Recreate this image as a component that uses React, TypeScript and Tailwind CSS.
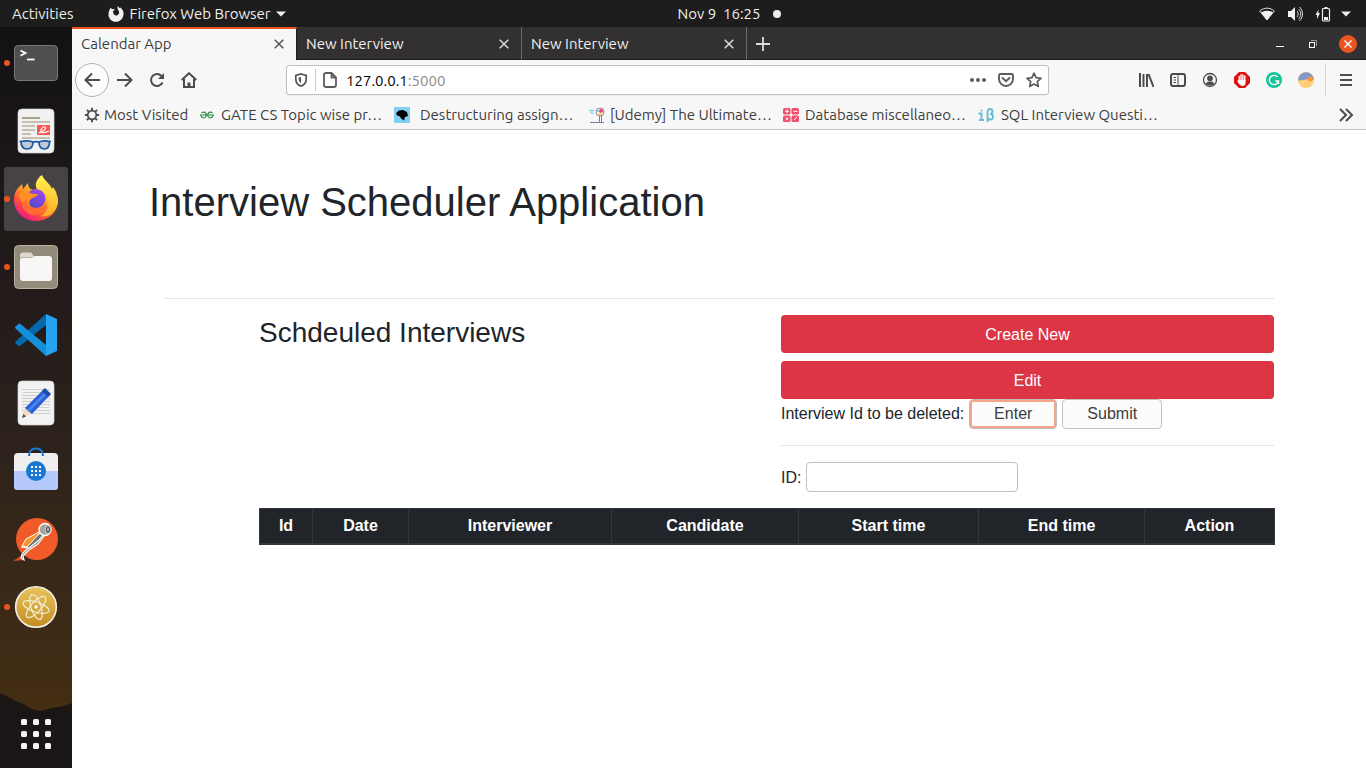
import type { ReactNode } from "react";

function DockItem({ label, running, active, children }: { label: string; running?: boolean; active?: boolean; children: ReactNode }) {
  return (
    <button
      type="button"
      aria-label={label}
      className={`relative flex h-16 w-16 shrink-0 items-center justify-center rounded-[3px] ${active ? "bg-[#474344]" : ""}`}
    >
      {running && <span className="absolute left-0 top-[29px] h-1.5 w-1.5 rounded-full bg-[#e95420]" />}
      <svg width="48" height="48" viewBox="0 0 48 48" aria-hidden="true">
        {children}
      </svg>
    </button>
  );
}

function TerminalIcon() {
  return (
    <g>
      <rect x="2.5" y="6.5" width="43" height="35" rx="3.5" fill="#4f4f4f" stroke="#777" />
      <path d="M8.5 11.5l5 2.6-5 2.6" fill="none" stroke="#fff" strokeWidth="1.8" />
      <path d="M15 20.5h7.5" stroke="#fff" strokeWidth="1.8" />
    </g>
  );
}

function DocViewerIcon() {
  return (
    <g>
      <rect x="6" y="2" width="36" height="44" rx="4" fill="#f1f1f1" stroke="#d5d5d5" strokeWidth=".7" />
      <path d="M10 11h18" stroke="#aaa28d" strokeWidth="2" />
      <path d="M10 15h28M10 19h13M10 23h13M10 27h9M10 31h28" stroke="#c4c0b2" strokeWidth="2" />
      <rect x="25" y="18" width="13" height="10" fill="#f4584f" />
      <path d="M26.500 26c5-1 8.500-5 6.500-6s-5.500 3-3.500 5 5 0 7.500-1" fill="none" stroke="#fff" strokeWidth="1.1" />
      <path d="M9 34.500c3-1 9-1 12 .5 0 5-2 7-6 7s-6-3-6-7.500zM27 35c3-1.500 8-1.500 10.500-.5 0 5-2 7.500-5 7.500s-5.500-2-5.500-7z" fill="#abb8c8" fillOpacity=".7" stroke="#1b5aa4" strokeWidth="1.700" />
      <path d="M21 35.500c2-1.200 4-1.200 6 0M9 34.500H7.500M37.500 34.500H39" fill="none" stroke="#1b5aa4" strokeWidth="1.700" />
    </g>
  );
}

function FirefoxIcon() {
  return (
    <g>
      <defs>
        <linearGradient id="fxBody" x1=".85" y1=".1" x2=".2" y2=".95">
          <stop offset="0" stopColor="#fff23f" />
          <stop offset=".35" stopColor="#ffa829" />
          <stop offset=".65" stopColor="#ff5b34" />
          <stop offset="1" stopColor="#ee108c" />
        </linearGradient>
        <linearGradient id="fxGlobe" x1=".8" y1="0" x2=".2" y2="1">
          <stop offset="0" stopColor="#a848e8" />
          <stop offset="1" stopColor="#4b48cc" />
        </linearGradient>
        <linearGradient id="fxTail" x1="0" y1="0" x2="0" y2="1">
          <stop offset="0" stopColor="#fff44f" />
          <stop offset="1" stopColor="#ffab26" />
        </linearGradient>
      </defs>
      <path d="M6 13l4-4 1 5 5-6c0 4 2 6 5 7l13-4c8 4 12 9 12 15 0 11-10 20-22 20S2 37 2 25c0-5 1-9 4-12z" fill="url(#fxBody)" />
      <path d="M30 0c2 5 7 8 9 12 1 2 1 2 2 0 5 6 7 17 1 24-4 5-9 6-13 5 6-4 9-10 7-16-2-6-7-7-11-11-3-4 0-11 5-14z" fill="url(#fxTail)" />
      <circle cx="24" cy="23.500" r="9.500" fill="url(#fxGlobe)" />
      <path d="M7 19c4-3 8-3 11-1 3 1 5 1 8 1-1 3-4 3-7 5-3 3-2 7 2 10-9-1-13-8-14-15z" fill="#ff8f22" />
      <path d="M15 24c-1 6 3 10 9 10 5 0 8-2 10-6 1 7-4 12-11 12-8 0-13-6-13-12z" fill="#ff6b31" />
    </g>
  );
}

function FilesIcon() {
  return (
    <g>
      <rect x="2.500" y="2.500" width="43" height="43" rx="4" fill="#938b79" stroke="#b8b19f" />
      <path d="M8 12c0-1.500 1-2.500 2.500-2.500H19l4 5H8z" fill="#ddd9cf" />
      <path d="M8 17c0-1.500 1-2 2.500-2H20l3-2h14c2 0 3 1 3 3v19c0 2-1 3-3 3H11c-2 0-3-1-3-3z" fill="#f8f7f5" />
    </g>
  );
}

function CodeIcon() {
  return (
    <g>
      <path d="M3 32q0-1 1-2L34 3v11L8 35q-1 .5-2-.5z" fill="#0769ad" />
      <path d="M3 16l3.500-3q1-.8 2 0L34 34v11L4 18q-1-1-1-2z" fill="#168fdb" />
      <path d="M34 3l11 5v32l-11 5z" fill="#27a3f2" />
    </g>
  );
}

function EditorIcon() {
  return (
    <g>
      <rect x="6" y="2" width="36" height="44" rx="4" fill="#f2f2f2" stroke="#d5d5d5" strokeWidth=".7" />
      <path d="M10 10.500h28M10 13.500h28M10 16.500h28M10 19.500h28M10 22.500h28M10 25.500h28M10 28.500h28M10 31.500h28M10 34.500h28" stroke="#cfcfcf" strokeWidth="1" />
      <path d="M10 39l4-11 6 6z" fill="#f3d9bd" />
      <path d="M10 39l1.500-4 2.500 2.500z" fill="#444" />
      <path d="M13 29l19-19 6 6-18 19z" fill="#295fd5" />
      <path d="M15 31l19-19 2 2-19 19z" fill="#4c83ee" />
      <path d="M30 12l3-3 6 6-3 3z" fill="#2048ab" />
    </g>
  );
}

function SoftwareIcon() {
  return (
    <g>
      <rect x="2" y="6" width="44" height="37" rx="4" fill="#efeff0" />
      <path d="M2 24h44v15c0 3-1 4-4 4H6c-3 0-4-1-4-4z" fill="#b4c8fb" />
      <path d="M17 9c0-5 3-7.500 7-7.500S31 4 31 9" fill="none" stroke="#1777d2" strokeWidth="2" />
      <circle cx="24" cy="24" r="10" fill="#1878d3" />
      <g fill="#fff">
        {[20, 24, 28].map((x) => [20, 24, 28].map((y) => <rect key={`${x}-${y}`} x={x - 1} y={y - 1} width="2" height="2" />))}
      </g>
    </g>
  );
}

function PostmanIcon() {
  return (
    <g>
      <circle cx="25" cy="24" r="21" fill="#f15a29" />
      <path d="M1 46l9-6 2 5z" fill="#dd4a20" />
      <path d="M29 18l3 3-6 8-9 6-6 6 1 4-3-2 1-4 8-8z" fill="#8a8a8a" stroke="#f8f8f4" strokeWidth="1.200" />
      <path d="M29 18l-13 6-6 8 7 1 10-8 4-5z" fill="#6f6f6f" stroke="#f8f8f4" strokeWidth="1.200" />
      <path d="M27 17l-13 7-4 7 5 1 12-13z" fill="#f69425" stroke="#fff" strokeWidth="1" />
      <circle cx="33" cy="14.500" r="6" fill="#a5a5a5" stroke="#fff" strokeWidth="1.300" />
      <ellipse cx="36" cy="14.500" rx="2.800" ry="4" fill="#555" stroke="#ddd" />
      <path d="M36 12.500v3.500" stroke="#fff" />
    </g>
  );
}

function AtomIcon() {
  return (
    <g>
      <defs>
        <linearGradient id="atomFill" x1="0" y1="0" x2="0" y2="1">
          <stop offset="0" stopColor="#e8c35d" />
          <stop offset="1" stopColor="#c48c25" />
        </linearGradient>
      </defs>
      <circle cx="24" cy="24" r="20.300" fill="url(#atomFill)" stroke="#f4f0e8" strokeWidth="1.600" />
      <g fill="none" stroke="#f0efce" strokeWidth="1.200">
        <ellipse cx="24" cy="24" rx="13.500" ry="5" transform="rotate(18 24 24)" />
        <ellipse cx="24" cy="24" rx="13" ry="5" transform="rotate(72 24 24)" />
        <ellipse cx="24" cy="24" rx="13.500" ry="5" transform="rotate(132 24 24)" />
      </g>
      <circle cx="24" cy="24" r="1.700" fill="#fff" />
    </g>
  );
}

function Dock() {
  return (
    <nav
      aria-label="Dock"
      className="relative flex w-[72px] shrink-0 flex-col items-center justify-between bg-linear-to-b from-[#131114] via-[#29201c] to-[#49310f] pt-1 pb-0.5"
    >
      <svg className="absolute bottom-0 left-0 h-[80px] w-full" viewBox="0 0 72 80" preserveAspectRatio="none" aria-hidden="true">
        <path d="M0 5l14 7 11 5 7 4 8 2 12-3 12-2 8-3v65H0z" fill="#1a1616" />
      </svg>
      <div className="flex flex-col gap-1">
        <DockItem label="Terminal" running><TerminalIcon /></DockItem>
        <DockItem label="Document Viewer"><DocViewerIcon /></DockItem>
        <DockItem label="Firefox Web Browser" running active><FirefoxIcon /></DockItem>
        <DockItem label="Files" running><FilesIcon /></DockItem>
        <DockItem label="Visual Studio Code"><CodeIcon /></DockItem>
        <DockItem label="Text Editor"><EditorIcon /></DockItem>
        <DockItem label="Ubuntu Software"><SoftwareIcon /></DockItem>
        <DockItem label="Postman"><PostmanIcon /></DockItem>
        <DockItem label="Atom" running><AtomIcon /></DockItem>
      </div>
      <DockItem label="Show Applications">
        <g fill="#f3f3f3">
          {[9, 21, 33].map((x) => [9, 21, 33].map((y) => <rect key={`${x}-${y}`} x={x} y={y} width="6" height="6" rx="1.500" />))}
        </g>
      </DockItem>
    </nav>
  );
}

function TopBar() {
  return (
    <header className="grid h-[27px] shrink-0 grid-cols-[1fr_auto_1fr] items-center bg-[#1d1d1d] text-[15px] leading-5 text-[#eeeeec]">
      <div className="flex items-center pl-3">
        <button type="button">Activities</button>
        <button type="button" className="ml-[34px] flex items-center">
          <svg width="16" height="16" viewBox="0 0 16 16" className="mr-1.5" aria-hidden="true">
            <path d="M3 1.500c.2 1 .8 1.500 1.600 1.700l2.200-.2c-.2 1-.9 1.700-1.800 2.300C5 7.500 6 9.500 8 9.500c2.500 0 4-2.500 2.500-5C9.800 3.500 9 2 9.700 0c.6 1 1.500 1.500 2.400 2.400 0-.5 0-.8-.1-1.200C14.500 3 16 5.500 15.500 8.500 15 12.800 12 15.800 8 15.800 3.500 15.800.5 12.500.5 8.500.5 5.500 1.700 3 3 1.500z" fill="#f2f2f2" />
          </svg>
          Firefox Web Browser
          <svg width="10" height="6" viewBox="0 0 10 6" className="ml-[5px]" aria-hidden="true"><path d="M0 .5h10L5 5.500z" fill="#eee" /></svg>
        </button>
      </div>
      <button type="button" className="flex items-center pl-[92px]">
        Nov 9&nbsp; 16:25
        <span className="ml-3 h-2 w-2 rounded-full bg-[#eee]" />
      </button>
      <div className="flex items-center justify-end gap-3 pr-[15px]" aria-label="System status">
        <svg width="16" height="14" viewBox="0 0 16 14" aria-hidden="true">
          <path d="M.7 4C5 .2 11 .2 15.300 4L8 13z" fill="none" stroke="#ddd" />
          <path d="M2 5.500C6 3 10 3 14 5.500L8 13z" fill="#f2f2f2" />
        </svg>
        <svg width="16" height="16" viewBox="0 0 16 16" aria-hidden="true">
          <path d="M1 5h3l4-4v14l-4-4H1z" fill="#f2f2f2" />
          <path d="M10 5c1.500 2 1.500 4 0 6M11.500 3c3 3 3 7 0 10M12.500 1c4 4 4 10 0 14" fill="none" stroke="#ddd" />
        </svg>
        <svg width="16" height="16" viewBox="0 0 16 16" aria-hidden="true">
          <path d="M3.500 3.500L.5 9H2v4l3-6H3.300z" fill="#eee" />
          <rect x="7.500" y="2.500" width="7" height="12.500" rx="1" fill="none" stroke="#eee" strokeWidth="1.200" />
          <path d="M9.500 1h3v1h-3zM9 11h4v3H9z" fill="#eee" />
        </svg>
        <svg width="10" height="6" viewBox="0 0 10 6" className="-ml-0.5" aria-hidden="true"><path d="M0 .5h10L5 5.500z" fill="#eee" /></svg>
      </div>
    </header>
  );
}

function CloseGlyph() {
  return (
    <svg width="10" height="10" viewBox="0 0 10 10" aria-hidden="true">
      <path d="M.7.7l8.600 8.600M9.300.7L.7 9.300" stroke="currentColor" strokeWidth="1.500" />
    </svg>
  );
}

function Tab({ title, active }: { title: string; active?: boolean }) {
  return (
    <div
      className={`flex w-[225px] items-center justify-between border-r pr-3 pl-[9px] ${
        active ? "border-t-2 border-t-[#e95420] border-r-[#1d1d1d] bg-[#f7f7f7] pb-0.5 text-[#3d3d3d]" : "border-r-[#6e6b6b] border-b border-b-[#1d1d1d] pt-0.5 text-[#f0f0f0]"
      }`}
    >
      <button type="button" role="tab" aria-selected={!!active}>{title}</button>
      <button type="button" aria-label={`Close ${title}`} className={active ? "text-[#555]" : "text-[#ddd]"}><CloseGlyph /></button>
    </div>
  );
}

function TabBar() {
  return (
    <div className="flex h-[33px] bg-[#333031]">
      <div role="tablist" className="flex">
        <Tab title="Calendar App" active />
        <Tab title="New Interview" />
        <Tab title="New Interview" />
      </div>
      <div className="flex grow items-center justify-between border-b border-[#1d1d1d] pt-0.5 pr-[9px] pl-[9px]">
        <button type="button" aria-label="New tab">
          <svg width="14" height="14" viewBox="0 0 14 14" aria-hidden="true"><path d="M7 0v14M0 7h14" stroke="#ddd" strokeWidth="1.800" /></svg>
        </button>
        <div className="flex items-center gap-[19px]">
          <button type="button" aria-label="Minimize">
            <svg width="14" height="14" viewBox="0 0 14 14" aria-hidden="true"><path d="M3 9.500h8" stroke="#fff" /></svg>
          </button>
          <button type="button" aria-label="Restore">
            <svg width="14" height="14" viewBox="0 0 14 14" aria-hidden="true">
              <rect x="3.500" y="5.500" width="5" height="5" fill="none" stroke="#fff" />
              <path d="M5 3.500h5.500V9" fill="none" stroke="#999" />
            </svg>
          </button>
          <button type="button" aria-label="Close window" className="flex h-[18px] w-[18px] items-center justify-center rounded-full bg-[#e95420]">
            <svg width="8" height="8" viewBox="0 0 8 8" aria-hidden="true"><path d="M.5.5l7 7M7.500.5l-7 7" stroke="#fff" strokeWidth="1.400" /></svg>
          </button>
        </div>
      </div>
    </div>
  );
}

function ToolButton({ label, children }: { label: string; children: ReactNode }) {
  return (
    <button type="button" aria-label={label} className="flex h-8 w-8 shrink-0 items-center justify-center text-[#4c4c4c]">
      <svg width="16" height="16" viewBox="0 0 16 16" fill="none" stroke="currentColor" strokeWidth="2" aria-hidden="true">
        {children}
      </svg>
    </button>
  );
}

function NavBar() {
  return (
    <div className="flex h-10 items-center pr-1 pl-[3px]">
      <button type="button" aria-label="Back" className="flex h-[34px] w-[34px] items-center justify-center rounded-full border border-[#b0b0b0] bg-[#fcfcfc] text-[#4c4c4c]">
        <svg width="16" height="16" viewBox="0 0 16 16" fill="none" stroke="currentColor" strokeWidth="2" aria-hidden="true">
          <path d="M16 8H1.500M8 1.500L1.500 8 8 14.500" />
        </svg>
      </button>
      <ToolButton label="Forward"><path d="M0 8h14.500M8 1.500L14.500 8 8 14.500" /></ToolButton>
      <ToolButton label="Reload">
        <path d="M13.500 10.500A6 6 0 1 1 12.500 4" />
        <path d="M15 1v6H9z" fill="currentColor" stroke="none" />
      </ToolButton>
      <ToolButton label="Home">
        <path d="M.7 8L8 1.200 15.300 8M3 7v8h10V7" />
        <path d="M8 15v-4.500" strokeWidth="3" />
      </ToolButton>
      <div className="mr-[81px] ml-[81px] flex h-[30px] grow items-center rounded-[3px] border border-[#c0c0c0] bg-white shadow-xs">
        <button type="button" aria-label="Tracking protection" className="flex h-full w-7 items-center justify-center text-[#555]">
          <svg width="14" height="14" viewBox="0 0 14 14" fill="none" stroke="currentColor" strokeWidth="1.700" aria-hidden="true">
            <path d="M7 1L12.200 2.500V6c0 3.500-2 6-5.200 7.200C3.800 12 1.800 9.500 1.800 6V2.500z" />
            <path d="M7 4v6.300C5.300 9 4.700 7.500 4.700 6V4.600z" fill="currentColor" stroke="none" />
          </svg>
        </button>
        <span className="h-[22px] w-px bg-[#ccc]" />
        <svg width="16" height="16" viewBox="0 0 16 16" fill="none" stroke="#5c5c5c" strokeWidth="1.800" className="ml-1.5 shrink-0" aria-hidden="true">
          <path d="M9.500 1H4Q2 1 2 3v10q0 2 2 2h8q2 0 2-2V5.500zM9.500 1v4.500H14" strokeLinejoin="round" />
        </svg>
        <a href="#address" className="ml-2 grow pt-px text-[#8b8b8b]"><span className="text-black">127.0.0.1</span>:5000</a>
        <div className="flex items-center gap-3 pr-1.5 text-[#5c5c5c]">
          <button type="button" aria-label="Page actions">
            <svg width="16" height="16" viewBox="0 0 16 16" fill="currentColor" aria-hidden="true"><circle cx="2" cy="8" r="2" /><circle cx="8" cy="8" r="2" /><circle cx="14" cy="8" r="2" /></svg>
          </button>
          <button type="button" aria-label="Save to Pocket">
            <svg width="16" height="16" viewBox="0 0 16 16" fill="none" stroke="currentColor" strokeWidth="1.900" aria-hidden="true">
              <path d="M2.500 2h11Q15 2 15 3.500V7A7 7 0 0 1 1 7V3.500Q1 2 2.500 2z" />
              <path d="M4.500 6L8 9.300 11.500 6" strokeLinecap="round" />
            </svg>
          </button>
          <button type="button" aria-label="Bookmark this page">
            <svg width="16" height="16" viewBox="0 0 16 16" fill="none" stroke="currentColor" strokeWidth="1.700" strokeLinejoin="round" aria-hidden="true">
              <path d="M8 1.200l2 4.500 5 .6-3.700 3.300 1 4.900L8 12l-4.300 2.500 1-4.900L1 6.300l5-.6z" />
            </svg>
          </button>
        </div>
      </div>
      <ToolButton label="Library"><path d="M2 1v14M5.500 2v13M9 2v13M10.500 2l5 13" /></ToolButton>
      <ToolButton label="Sidebars">
        <rect x="1" y="2" width="14" height="12" rx="2" />
        <path d="M8 2v12M3.500 5.500H6M3.500 8H6M3.500 10.500H6" strokeWidth="1" />
      </ToolButton>
      <ToolButton label="Account">
        <circle cx="8" cy="8" r="6.500" strokeWidth="1.300" />
        <circle cx="8" cy="6.300" r="2.900" fill="currentColor" stroke="none" />
        <path d="M3.500 12c1-2 2.500-2.500 4.500-2.500s3.500.5 4.500 2.500c-2.500 2-6.500 2-9 0z" fill="currentColor" stroke="none" />
      </ToolButton>
      <ToolButton label="Ad blocker">
        <path d="M5 0h6l5 5v6l-5 5H5l-5-5V5z" fill="#e40d0d" stroke="none" />
        <path d="M5.200 9V4.500M7 8V2.800M8.900 8V3M10.800 9V4" stroke="#fff" strokeWidth="1.400" strokeLinecap="round" />
        <path d="M4.500 8h7v3c0 2-1 3-3 3s-3-1-5-4.500c-.5-1 .5-1.500 1-.5z" fill="#fff" stroke="none" />
      </ToolButton>
      <ToolButton label="Grammar checker">
        <circle cx="8" cy="8" r="8" fill="#15c39a" stroke="none" />
        <path d="M11.500 5A4.600 4.600 0 1 0 12.500 9H9.300M12.500 8.500V12" stroke="#fff" strokeWidth="1.400" />
      </ToolButton>
      <ToolButton label="Scenery extension">
        <circle cx="8" cy="8" r="8" fill="#ffcf7b" stroke="none" />
        <path d="M0 8.500A8 8 0 1 1 16 8C11 5.500 5 9 0 8.500z" fill="#829aca" stroke="none" />
        <circle cx="12.300" cy="7" r="2.500" fill="#ff962d" stroke="none" />
      </ToolButton>
      <span className="mr-1 ml-[3px] h-[34px] w-px shrink-0 bg-[#d5d5d5]" />
      <ToolButton label="Open menu"><path d="M2 3h12M2 8h12M2 13h12" /></ToolButton>
    </div>
  );
}

function Bookmark({ label, width, gap, children }: { label: string; width: string; gap: string; children: ReactNode }) {
  return (
    <a href="#bookmark" className={`flex shrink-0 items-center whitespace-nowrap ${width} ${gap}`}>
      <svg width="16" height="16" viewBox="0 0 16 16" className="shrink-0" aria-hidden="true">{children}</svg>
      {label}
    </a>
  );
}

function BookmarksBar() {
  return (
    <div className="flex h-[30px] items-center justify-between border-b border-[#c4c4c4] pr-3 pl-3">
      <div className="flex items-center">
        <Bookmark label="Most Visited" width="w-[115px]" gap="gap-1">
          <circle cx="8" cy="8" r="4.300" fill="none" stroke="#4c4c4c" strokeWidth="1.700" />
          <path d="M8 .8v2.800M8 12.400v2.800M.8 8h2.800M12.400 8h2.800M2.900 2.900l2 2M11.100 11.100l2 2M13.100 2.900l-2 2M4.900 11.100l-2 2" stroke="#4c4c4c" strokeWidth="1.900" />
        </Bookmark>
        <Bookmark label="GATE CS Topic wise pr…" width="w-[195px]" gap="gap-1.5">
          <path d="M1 8h14M2.500 5.700C5 4.300 7.300 5.500 7.300 8s-2.500 3.300-4.300 2.300Q2 9.500 2 8M13.500 5.700C11 4.300 8.700 5.500 8.700 8s2.500 3.300 4.300 2.300Q14 9.500 14 8" fill="none" stroke="#2f8d46" strokeWidth="1.200" />
        </Bookmark>
        <Bookmark label="Destructuring assign…" width="w-[195px]" gap="gap-[10px]">
          <path d="M0 0h16v16H0z" fill="#83d0f2" />
          <path d="M2 6l3-2.500 4-.5 4 2 1 4-3 1-1 3.500-3-2-1-2-3-1z" fill="#000" />
        </Bookmark>
        <Bookmark label="[Udemy] The Ultimate…" width="w-[194px]" gap="gap-[5px]">
          <path d="M0 3l3 1 2-1M1.500 5.500l3 1" stroke="#51d6eb" strokeWidth="1.300" fill="none" />
          <path d="M10.500 9v6M12.500 9v6M1 15.500h14" stroke="#8b75a7" fill="none" />
          <circle cx="11" cy="5" r="4" fill="#fff" stroke="#9b77ac" />
          <circle cx="12" cy="4" r="2" fill="#ee4668" />
          <path d="M9 8l2-3 2.500 3z" fill="#ffd536" />
          <circle cx="9" cy="4" r="1" fill="#51d6eb" />
        </Bookmark>
        <Bookmark label="Database miscellaneo…" width="w-[195px]" gap="gap-1.5">
          <rect x="0" y="1" width="7.500" height="6.500" rx="1.500" fill="#f0506e" /><rect x="8.500" y="1" width="7.500" height="6.500" rx="1.500" fill="#f0506e" />
          <rect x="0" y="8.500" width="7.500" height="6.500" rx="1.500" fill="#f0506e" /><rect x="8.500" y="8.500" width="7.500" height="6.500" rx="1.500" fill="#f0506e" />
          <path d="M2 4.300h4M4 2.300v4M10.500 4.300h4M2.700 10.500l2.600 2.600M5.300 10.500l-2.600 2.600M11 13l3-3" stroke="#fff" />
        </Bookmark>
        <Bookmark label="SQL Interview Questi…" width="w-[190px]" gap="gap-[7px]">
          <path d="M.5 6.500h3V13M1 13h5M9.500 15V5Q9.500 2 12 2t2.500 2.500Q14.500 7 12 7q3.200 0 3 3-.2 2.500-2.500 2.500-2 0-3-1" fill="none" stroke="#67bbd2" strokeWidth="1.900" />
          <circle cx="3.500" cy="3.500" r="1.100" fill="#67bbd2" />
        </Bookmark>
      </div>
      <button type="button" aria-label="More bookmarks">
        <svg width="16" height="14" viewBox="0 0 16 14" aria-hidden="true"><path d="M2 1l6 6-6 6M8 1l6 6-6 6" fill="none" stroke="#4c4c4c" strokeWidth="2" /></svg>
      </button>
    </div>
  );
}

const columns = [
  { name: "Id", width: "w-[53px]" },
  { name: "Date", width: "w-24" },
  { name: "Interviewer", width: "w-[203px]" },
  { name: "Candidate", width: "w-[187px]" },
  { name: "Start time", width: "w-[180px]" },
  { name: "End time", width: "w-[166px]" },
  { name: "Action", width: "w-[130px]" },
];

function SchedulerPage() {
  return (
    <main className="grow bg-white pt-12 pr-[92px] pl-[77px] font-['Liberation_Sans',Arial,sans-serif] text-base text-[#212529]">
      <h1 className="text-[40px] leading-[48px]">Interview Scheduler Application</h1>
      <hr className="mt-[72px] ml-[15px] border-[#e5e5e5]" />
      <div className="mt-4 ml-[110px]">
        <div className="grid grid-cols-[522fr_493fr]">
          <h2 className="text-[28px] leading-9">Schdeuled Interviews</h2>
          <div>
            <button type="button" className="block h-[38px] w-full rounded bg-[#dc3545] pt-0.5 text-white">Create New</button>
            <button type="button" className="mt-2 block h-[38px] w-full rounded bg-[#dc3545] pt-0.5 text-white">Edit</button>
            <div className="flex h-[31px] items-start leading-[30px]">
              <span>Interview Id to be deleted:</span>
              <button type="button" className="ml-[5px] flex h-[30px] w-[88px] items-center justify-center rounded border border-[#c0bcb9] bg-[#fcfcfc] text-[#3d3d3d] inset-ring-2 inset-ring-[#f4a58a]">Enter</button>
              <button type="button" className="ml-[5px] flex h-[30px] w-[100px] items-center justify-center rounded border border-[#c0c0c0] bg-[#fcfcfc] text-[#3d3d3d]">Submit</button>
            </div>
            <hr className="mt-[15px] border-[#e5e5e5]" />
            <form className="mt-4 flex items-center gap-[5px]" onSubmit={(e) => e.preventDefault()}>
              <label htmlFor="interview-id" className="pt-0.5">ID:</label>
              <input id="interview-id" type="text" className="h-[30px] w-[212px] rounded border border-[#c0c0c0] bg-white px-2 outline-none" />
            </form>
          </div>
        </div>
        <table className="mt-4 w-full table-fixed border-collapse border border-[#32383e] bg-[#212529] text-white">
          <thead>
            <tr>
              {columns.map((c) => (
                <th key={c.name} scope="col" className={`h-[35px] border border-b-2 border-[#32383e] p-0 text-center font-bold ${c.width}`}>{c.name}</th>
              ))}
            </tr>
          </thead>
        </table>
      </div>
    </main>
  );
}

export default function App() {
  return (
    <div className="flex min-h-screen flex-col font-['Ubuntu','Noto_Sans',sans-serif]">
      <TopBar />
      <div className="flex grow">
        <Dock />
        <div className="flex min-w-0 grow flex-col bg-[#f7f7f7] text-[15px] leading-5 text-[#3d3d3d]">
          <TabBar />
          <NavBar />
          <BookmarksBar />
          <SchedulerPage />
        </div>
      </div>
    </div>
  );
}
